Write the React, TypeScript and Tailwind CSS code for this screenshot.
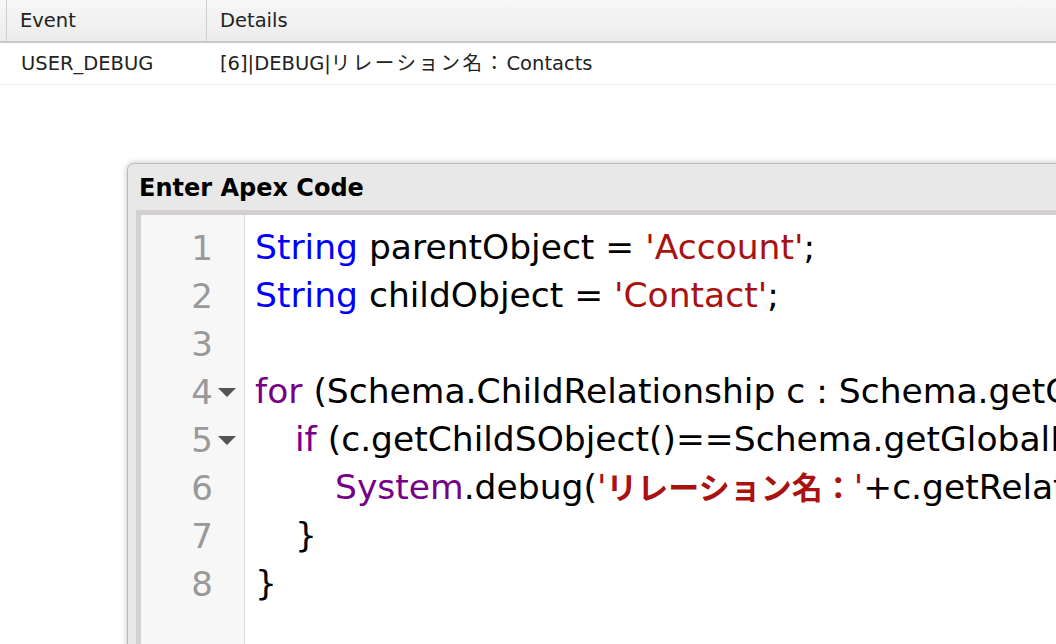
import React from "react";

const codeFont = { fontFamily: '"DejaVu Sans", "Noto Sans CJK JP", sans-serif' };

type Tok = { t: string; c?: string };

const K = "text-[#0000ff]";
const P = "text-[#770088]";
const S = "text-[#aa1111]";
const SJ = "text-[#aa1111] font-bold text-[31px]";

const lines: { indent: number; fold?: boolean; toks: Tok[] }[] = [
  { indent: 0, toks: [{ t: "String", c: K }, { t: " parentObject = " }, { t: "'Account'", c: S }, { t: ";" }] },
  { indent: 0, toks: [{ t: "String", c: K }, { t: " childObject = " }, { t: "'Contact'", c: S }, { t: ";" }] },
  { indent: 0, toks: [] },
  {
    indent: 0,
    fold: true,
    toks: [{ t: "for", c: P }, { t: " (Schema.ChildRelationship c : Schema.getGlobalDescribe()" }],
  },
  {
    indent: 1,
    fold: true,
    toks: [{ t: "if", c: P }, { t: " (c.getChildSObject()==Schema.getGlobalDescribe()" }],
  },
  {
    indent: 2,
    toks: [
      { t: "System", c: P },
      { t: ".debug(" },
      { t: "'", c: S },
      { t: "リレーション名：", c: SJ },
      { t: "'", c: S },
      { t: "+c.getRelationshipName());" },
    ],
  },
  { indent: 1, toks: [{ t: "}" }] },
  { indent: 0, toks: [{ t: "}" }] },
];

export default function App() {
  return (
    <div className="w-[1056px] h-[644px] overflow-hidden bg-white" style={{ fontFamily: '"DejaVu Sans", "Noto Sans CJK JP", sans-serif' }}>
      {/* Log table */}
      <div className="flex h-[43px] border-b-2 border-[#c9c9c9] bg-gradient-to-b from-[#f7f7f7] to-[#ececec] text-[19.5px] text-[#222]">
        <div className="w-[7px] border-r border-[#cfcfcf]" />
        <div className="w-[200px] border-r border-[#cfcfcf] flex items-center pl-[13px]">Event</div>
        <div className="flex-1 flex items-center pl-[13px]">Details</div>
      </div>
      <div className="flex h-[42px] border-b border-[#ececec] text-[19.5px] text-[#222] items-center">
        <div className="w-[208px] pl-[21px]">USER_DEBUG</div>
        <div className="flex-1 pl-[12px]">
          [6]|DEBUG|<span className="tracking-[2.5px]">リレーション名：</span>Contacts
        </div>
      </div>

      {/* Execute anonymous window */}
      <div className="ml-[127px] mt-[78px] w-[1000px] h-[500px] rounded-tl-[7px] border border-[#b9b9b9] bg-[#e8e8e8] shadow-[0_0_6px_rgba(0,0,0,0.25)] flex flex-col">
        <div className="h-[46px] flex items-center pl-[11px] pt-[1px] text-[24px] font-bold text-black">Enter Apex Code</div>
        <div className="flex-1 ml-[8px] border-l-[5px] border-t-[5px] border-[#d4d0d0] bg-white flex overflow-hidden" style={codeFont}>
          <div className="w-[104px] shrink-0 bg-[#f7f7f7] border-r border-[#dddddd] pt-[9px]">
            {lines.map((l, i) => (
              <div key={i} className="h-[48px] flex items-center justify-end pr-[4px] text-[34px] text-[#999]">
                <span>{i + 1}</span>
                <span className="w-[27px] flex justify-center">
                  {l.fold && (
                    <svg width="20" height="12" viewBox="0 0 20 12">
                      <path d="M1 2 L19 2 L10 11 Z" fill="#555" />
                    </svg>
                  )}
                </span>
              </div>
            ))}
          </div>
          <div className="flex-1 pl-[10px] pt-[9px] text-[34.5px] text-black whitespace-pre">
            {lines.map((l, i) => (
              <div key={i} className="h-[48px] flex items-center" style={{ paddingLeft: l.indent * 40 }}>
                {l.toks.map((tk, j) => (
                  <span key={j} className={tk.c}>
                    {tk.t}
                  </span>
                ))}
              </div>
            ))}
          </div>
        </div>
      </div>
    </div>
  );
}
